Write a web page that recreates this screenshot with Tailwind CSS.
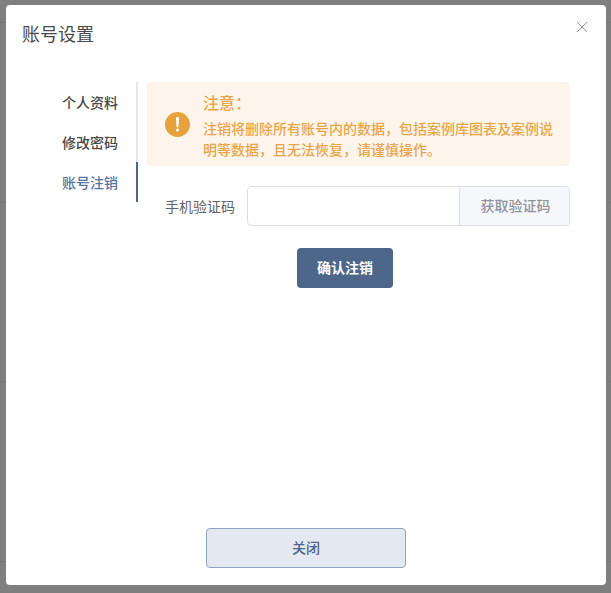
<!DOCTYPE html>
<html lang="zh-CN">
<head>
    <meta charset="UTF-8">
    <title>账号设置</title>
    <script src="https://cdn.jsdelivr.net/npm/@tailwindcss/browser@4"></script>
</head>
<body class="relative h-[593px] w-[611px] overflow-hidden bg-[#7f7f7f] font-['Liberation_Sans','Noto_Sans_CJK_SC',sans-serif]">
    <!-- page behind the overlay -->
    <div class="pt-[22px]">
        <div class="h-[180px] border-t border-[#777777]"></div>
        <div class="h-[179px] border-t border-[#777777]"></div>
        <div class="h-[180px] border-t border-[#777777]"></div>
        <div class="border-t border-[#777777]"></div>
    </div>

    <div class="absolute left-[6px] top-[5px] flex h-[580px] w-[600px] flex-col rounded-[4px] bg-white">
        <div class="relative h-[77px] pl-[16px] pt-[17px]">
            <h1 class="text-[18px] leading-[26px] text-[#4a4a4a]">账号设置</h1>
            <button class="absolute right-[18px] top-[16px] text-[#909399]">
                <svg class="block h-[12px] w-[12px]" viewBox="0 0 12 12" fill="none" stroke="currentColor" stroke-width="1"><path d="M1 1l10 10M11 1L1 11"/></svg>
            </button>
        </div>

        <div class="flex flex-1 items-start">
            <div class="w-[132px] border-r-2 border-[#e4e7ed] text-right text-[14px] font-medium leading-[42px] text-[#484848]">
                <div class="h-[40px] pr-[18px]">个人资料</div>
                <div class="h-[40px] pr-[18px]">修改密码</div>
                <div class="-mr-[2px] h-[40px] border-r-2 border-[#4c678a] pr-[18px] text-[#55749f]">账号注销</div>
            </div>

            <div class="ml-[9px] w-[423px]">
                <div class="flex h-[84px] items-center rounded-[4px] bg-[#fdf5ec] pl-[18px] text-[#e8a64a]">
                    <svg class="h-[25px] w-[25px] shrink-0" viewBox="0 0 25 25">
                        <circle cx="12.5" cy="12.5" r="12.5" fill="#e6a23c"/>
                        <path d="M11 6.2a1.5 1.5 0 0 1 3 0l-.5 8.3a1 1 0 0 1-2 0z" fill="#fff"/>
                        <circle cx="12.5" cy="18" r="1.5" fill="#fff"/>
                    </svg>
                    <div class="ml-[13px] w-[360px] self-start pt-[10px]">
                        <div class="text-[16px] font-medium leading-[24px]">注意：</div>
                        <p class="mt-[3px] text-[14px] font-medium leading-[21px]">注销将删除所有账号内的数据，包括案例库图表及案例说明等数据，且无法恢复，请谨慎操作。</p>
                    </div>
                </div>

                <div class="mt-[20px] flex h-[40px] items-center">
                    <label class="ml-[18px] w-[82px] pt-[2px] text-[14px] text-[#606266]">手机验证码</label>
                    <div class="flex h-[40px] w-[323px] rounded-[4px] border border-[#dcdfe6]">
                        <input type="text" class="min-w-0 flex-1 px-[15px] outline-none">
                        <button class="w-[110px] rounded-r-[4px] border-l border-[#dcdfe6] bg-[#f5f7fa] pl-[2px] text-[14px] font-medium text-[#909399]">获取验证码</button>
                    </div>
                </div>

                <div class="mt-[22px] pl-[150px]">
                    <button class="h-[40px] w-[96px] rounded-[4px] bg-[#4c678a] text-[14px] font-bold text-white">确认注销</button>
                </div>
            </div>
        </div>

        <div class="flex justify-center pb-[17px]">
            <button class="h-[40px] w-[200px] rounded-[4px] border border-[#8fa5c4] bg-[#e4e8f1] text-[14px] font-medium text-[#4c678a]">关闭</button>
        </div>
    </div>
</body>
</html>
